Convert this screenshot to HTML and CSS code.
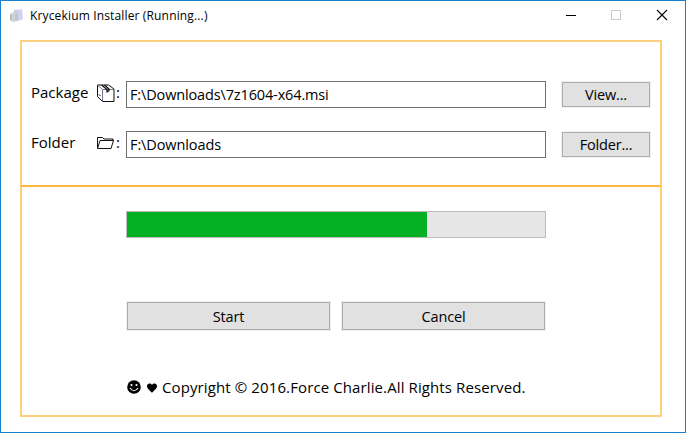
FILE: index.html
```html
<!DOCTYPE html>
<html lang="en">
<head>
<meta charset="utf-8">
<title>Krycekium Installer</title>
<link rel="stylesheet" href="styles.css">
</head>
<body>
<div class="window">
  <header class="titlebar">
    <svg class="app-icon" width="14" height="14" viewBox="0 0 14 14">
      <path d="M4 1l8-1 1 10-5 2-4-2z" fill="#d3d0f2"/>
      <path d="M4 1l4 1v10l-4-2z" fill="#c9c6e6"/>
      <path d="M0 5l3-2 4 1v8l-4 1-3-2z" fill="#cfd3d3"/>
      <path d="M0 5l2 1v6l-2-1z" fill="#b9bec0"/>
      <path d="M5 5h3v6H5z" fill="#b5c8ce"/>
    </svg>
    <span class="title">Krycekium Installer (Running...)</span>
    <div class="controls">
      <svg width="46" height="29" viewBox="0 0 46 29"><path d="M17 14.5h10" stroke="#000"/></svg>
      <svg width="46" height="29" viewBox="0 0 46 29"><rect x="16.5" y="9.5" width="9" height="9" fill="none" stroke="#ccc"/></svg>
      <svg width="46" height="29" viewBox="0 0 46 29"><path d="M16 9l10 10M26 9L16 19" stroke="#000" stroke-width="1.1"/></svg>
    </div>
  </header>
  <main class="panels">
    <section class="panel source">
      <div class="row">
        <span class="label">Package</span>
        <svg class="glyph" width="20" height="20" viewBox="0 0 20 20" fill="none" stroke="#111" stroke-linejoin="round">
          <path d="M1.500 2h11l5.500 4v12.500H6.500l-5-5z"/>
          <path d="M1.500 2l5 4.500h11.500M6.500 6.500v12" stroke="#777790"/>
          <path d="M5.500 2L11 6.500v2.500l2-1.500V6L8.500 2" stroke-width="1.300"/>
          <path d="M3 11.500l1.500 1.500"/>
        </svg>
        <span class="colon">:</span>
        <div class="field"><span class="msi">F:\Downloads\7z1604-x64.msi</span></div>
        <div class="button">View...</div>
      </div>
      <div class="row">
        <span class="label">Folder</span>
        <svg class="glyph" width="20" height="20" viewBox="0 0 20 20" fill="none" stroke="#111" stroke-linejoin="round">
          <path d="M1.500 15V4.500h5l1.500 1.500h9v2"/>
          <path d="M1.500 15.500L4 7.500h13.500l-2.500 8z"/>
        </svg>
        <span class="colon">:</span>
        <div class="field"><span class="dir">F:\Downloads</span></div>
        <div class="button">Folder...</div>
      </div>
    </section>
    <section class="panel actions">
      <div class="progress"><div class="bar" style="width:300px"></div></div>
      <div class="commands">
        <div class="button">Start</div>
        <div class="button">Cancel</div>
      </div>
      <footer class="footer">
        <svg width="14" height="14" viewBox="0 0 14 14">
          <circle cx="7" cy="7" r="6.800" fill="#000"/>
          <circle cx="4.500" cy="5" r="1.100" fill="#fff"/><circle cx="9.500" cy="5" r="1.100" fill="#fff"/>
          <path d="M3 8q4 5.500 8 0" fill="none" stroke="#fff" stroke-width="1.200"/>
        </svg>
        <svg class="heart" width="10" height="10" viewBox="0 0 10 10"><path d="M5 9.800C3 7.500 0 5.800 0 3 0 .2 3.600-.4 5 2 6.400-.4 10 .2 10 3c0 2.800-3 4.500-5 6.800z" fill="#000"/></svg>
        <span class="copyright">Copyright © 2016.Force Charlie.All Rights Reserved.</span>
      </footer>
    </section>
  </main>
</div>
</body>
</html>
```
FILE: styles.css
```css
* { box-sizing: border-box; }
body {
  margin: 0;
  font: 15px/20px "Open Sans", "Noto Sans", sans-serif;
  color: #000;
  white-space: nowrap;
}
svg { display: block; flex: none; }
.window {
  width: 686px;
  height: 433px;
  border: 1px solid #1c80cd;
  background: #fff;
}
.titlebar {
  display: flex;
  align-items: center;
  height: 29px;
  padding-left: 9px;
  font-size: 12px;
}
.title { width: 180px; margin-left: 6px; letter-spacing: .15px; }
.controls { display: flex; margin-left: auto; margin-right: -1px; }
.controls svg:last-child { margin-right: -1px; }
.panels {
  width: 642px;
  margin: 10px 0 0 19px;
}
.panel { border: 2px solid #ffcf80; }
.source {
  display: grid;
  gap: 23px;
  height: 147px;
  padding: 39px 9px 0;
  align-content: start;
  border-bottom-color: #ffb740;
}
.row { display: flex; align-items: center; height: 27px; }
.label { width: 65px; margin-top: -6px; }
.glyph { margin-top: -4px; }
.colon { width: 10px; margin-top: -5px; }
.field {
  width: 420px;
  height: 27px;
  padding: 3px 0 0 3px;
  border: 1px solid #707070;
  font-size: 14.5px;
}
.msi { letter-spacing: -.14px; }
.dir { letter-spacing: -.1px; }
.button {
  display: flex;
  align-items: center;
  justify-content: center;
  padding-top: 1px;
  border: 1px solid #adadad;
  background: #e1e1e1;
  box-shadow: 0 0 0 1px #f0f0f0;
  font-size: 14.5px;
  letter-spacing: -.18px;
}
.row .button { width: 88px; height: 25px; margin-left: 16px; }
.actions {
  height: 230px;
  padding: 24px 0 0 104px;
  border-top: 0;
}
.progress {
  width: 420px;
  height: 27px;
  border: 1px solid #bcbcbc;
  background: #e6e6e6;
}
.bar { height: 25px; background: #06b025; }
.commands {
  display: grid;
  grid-template-columns: 203px 203px;
  gap: 12px;
  margin: 64px 0 0 1px;
}
.commands .button { height: 28px; }
.footer { display: flex; align-items: center; height: 20px; margin: 47px 0 0 1px; }
.heart { margin: 1px 5px 0 6px; }
.copyright { letter-spacing: .11px; }
```
